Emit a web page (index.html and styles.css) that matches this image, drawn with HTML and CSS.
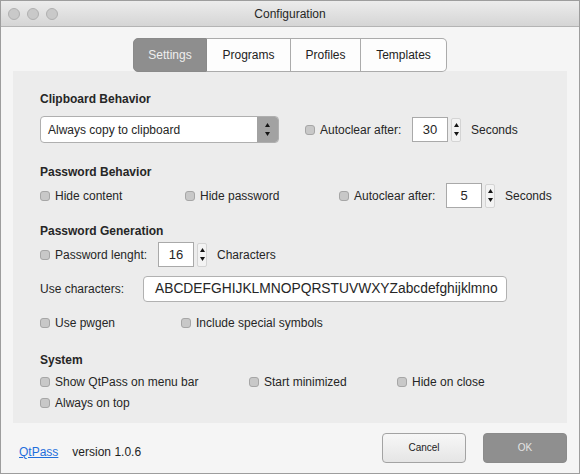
FILE: index.html
```html
<!DOCTYPE html>
<html>
<head>
<meta charset="utf-8">
<title>Configuration</title>
<link rel="stylesheet" href="styles.css">
</head>
<body>
<div class="window">
  <div class="titlebar">
    <div class="lights">
      <span class="light"></span><span class="light"></span><span class="light"></span>
    </div>
    <div class="title">Configuration</div>
    <div></div>
  </div>
  <div class="content">
    <div class="tabs">
      <div class="tab tab-settings active">Settings</div>
      <div class="tab tab-programs">Programs</div>
      <div class="tab tab-profiles">Profiles</div>
      <div class="tab tab-templates">Templates</div>
    </div>
    <div class="panel">
      <div class="heading">Clipboard Behavior</div>
      <div class="row row-clip">
        <div class="select">
          <span class="select-text">Always copy to clipboard</span>
          <span class="select-arrows"><svg width="5" height="13" viewBox="0 0 5 13"><polygon points="0,4 2.5,0 5,4" fill="#151515"/><polygon points="0,9 2.5,13 5,9" fill="#151515"/></svg></span>
        </div>
        <label class="check w-auto1"><span class="box"></span>Autoclear after:</label>
        <div class="spin"><span class="spin-input">30</span><span class="spin-arrows"><svg width="5" height="13" viewBox="0 0 5 13"><polygon points="0,4 2.5,0 5,4" fill="#151515"/><polygon points="0,9 2.5,13 5,9" fill="#151515"/></svg></span></div>
        <span class="unit">Seconds</span>
      </div>

      <div class="heading gap-h">Password Behavior</div>
      <div class="row row-pb">
        <label class="check w-hidecontent"><span class="box"></span>Hide content</label>
        <label class="check w-hidepass"><span class="box"></span>Hide password</label>
        <label class="check w-auto2"><span class="box"></span>Autoclear after:</label>
        <div class="spin"><span class="spin-input">5</span><span class="spin-arrows"><svg width="5" height="13" viewBox="0 0 5 13"><polygon points="0,4 2.5,0 5,4" fill="#151515"/><polygon points="0,9 2.5,13 5,9" fill="#151515"/></svg></span></div>
        <span class="unit">Seconds</span>
      </div>

      <div class="heading gap-h2">Password Generation</div>
      <div class="row row-pl">
        <label class="check w-length"><span class="box"></span>Password lenght:</label>
        <div class="spin"><span class="spin-input">16</span><span class="spin-arrows"><svg width="5" height="13" viewBox="0 0 5 13"><polygon points="0,4 2.5,0 5,4" fill="#151515"/><polygon points="0,9 2.5,13 5,9" fill="#151515"/></svg></span></div>
        <span class="unit">Characters</span>
      </div>
      <div class="row row-uc">
        <span class="w-usechars">Use characters:</span>
        <div class="text-input">ABCDEFGHIJKLMNOPQRSTUVWXYZabcdefghijklmno</div>
      </div>
      <div class="row row-pw">
        <label class="check w-pwgen"><span class="box"></span>Use pwgen</label>
        <label class="check"><span class="box"></span>Include special symbols</label>
      </div>

      <div class="heading gap-h">System</div>
      <div class="row row-sys1">
        <label class="check w-menubar"><span class="box"></span>Show QtPass on menu bar</label>
        <label class="check w-minimized"><span class="box"></span>Start minimized</label>
        <label class="check"><span class="box"></span>Hide on close</label>
      </div>
      <div class="row row-sys2">
        <label class="check"><span class="box"></span>Always on top</label>
      </div>
    </div>
    <div class="footer">
      <div class="footer-info">
        <a class="link" href="#">QtPass</a>
        <span>version 1.0.6</span>
      </div>
      <div class="buttons">
        <div class="btn btn-cancel">Cancel</div>
        <div class="btn btn-ok">OK</div>
      </div>
    </div>
  </div>
</div>
</body>
</html>
```
FILE: styles.css
```css
* { box-sizing: border-box; }
html, body { margin: 0; padding: 0; }
body {
  width: 580px;
  height: 474px;
  font-family: "Liberation Sans", Arial, sans-serif;
  font-size: 12px;
  line-height: 16px;
  color: #262626;
  background: #f5f5f5;
}
.window {
  width: 580px;
  height: 474px;
  border: 1px solid #9d9d9d;
  background: #f5f5f5;
  display: flex;
  flex-direction: column;
}
.titlebar {
  flex: none;
  height: 26px;
  border-bottom: 1px solid #b4b4b4;
  background: linear-gradient(#ececec, #d5d5d5);
  display: grid;
  grid-template-columns: 1fr auto 1fr;
  align-items: center;
}
.lights {
  display: flex;
  gap: 7px;
  padding-left: 7px;
}
.light {
  width: 12px;
  height: 12px;
  border-radius: 50%;
  background: #c9c9c9;
  border: 1px solid #b0b0b0;
}
.title {
  font-size: 12px;
  color: #262626;
}
.content {
  flex: 1;
  padding: 11px 12px 0;
  display: flex;
  flex-direction: column;
}
.tabs {
  display: flex;
  justify-content: center;
  margin-bottom: -1px;
  position: relative;
  z-index: 1;
}
.tab {
  height: 34px;
  display: flex;
  align-items: center;
  justify-content: center;
  background: #fdfdfd;
  border: 1px solid #ababab;
  border-left: none;
  color: #222;
}
.tab-settings { width: 74px; border-left: 1px solid #8a8a8a; border-radius: 5px 0 0 5px; }
.tab-programs { width: 84px; }
.tab-profiles { width: 70px; }
.tab-templates { width: 86px; border-radius: 0 5px 5px 0; }
.tab.active {
  background: #8e8e8e;
  border-color: #8a8a8a;
  color: #efefef;
}
.panel {
  background: #ececec;
  padding: 20px 0 12px 27px;
  display: flex;
  flex-direction: column;
}
.heading {
  font-weight: bold;
  height: 16px;
}
.gap-h { margin-top: 21px; }
.gap-h2 { margin-top: 15px; }
.row {
  display: flex;
  align-items: center;
}
.row-clip { margin-top: 9px; height: 27px; }
.row-pb { margin-top: 3px; height: 25px; }
.row-pl { margin-top: 3px; height: 25px; }
.row-uc { margin-top: 9px; height: 26px; }
.row-pw { margin-top: 13px; height: 16px; }
.row-sys1 { margin-top: 6px; height: 16px; }
.row-sys2 { margin-top: 5px; height: 16px; }
.check {
  display: flex;
  align-items: center;
  flex: none;
  white-space: nowrap;
}
.box {
  width: 10px;
  height: 10px;
  border-radius: 3px;
  background: #c8c8c8;
  border: 1px solid #a6a6a6;
  margin-right: 5px;
  flex: none;
}
.w-auto1 { width: 107px; margin-left: 26px; }
.w-hidecontent { width: 145px; }
.w-hidepass { width: 154px; }
.w-auto2 { width: 107px; }
.w-length { width: 118px; }
.w-usechars { width: 103px; flex: none; }
.w-pwgen { width: 141px; }
.w-menubar { width: 209px; }
.w-minimized { width: 148px; }
.select {
  width: 239px;
  height: 27px;
  border: 1px solid #afafaf;
  border-radius: 4px;
  background: #fff;
  display: flex;
  overflow: hidden;
  flex: none;
}
.select-text {
  flex: 1;
  padding-left: 7px;
  display: flex;
  align-items: center;
}
.select-arrows {
  width: 21px;
  background: #a2a2a2;
  display: flex;
  align-items: center;
  justify-content: center;
}
.spin {
  display: flex;
  align-items: center;
  flex: none;
}
.spin-input {
  width: 36px;
  height: 25px;
  border: 1px solid #a9a9a9;
  background: #fff;
  display: flex;
  align-items: center;
  justify-content: center;
  font-size: 13px;
}
.spin-arrows {
  width: 10px;
  height: 24px;
  margin-left: 3px;
  border: 1px solid #d4d4d4;
  border-radius: 2px;
  background: #f3f3f3;
  display: flex;
  align-items: center;
  justify-content: center;
}
.unit { margin-left: 10px; }
.text-input {
  width: 364px;
  height: 26px;
  border: 1px solid #b1b1b1;
  border-radius: 4px;
  background: #fff;
  padding-left: 11px;
  font-size: 13.8px;
  display: flex;
  align-items: center;
  overflow: hidden;
  white-space: nowrap;
  flex: none;
}
.footer {
  margin-top: 10px;
  height: 30px;
  display: flex;
  align-items: flex-start;
  padding-left: 6px;
}
.footer-info {
  margin-top: 11px;
  display: flex;
  gap: 14px;
  color: #1e1e1e;
}
.link {
  color: #1f6fdc;
  text-decoration: underline;
}
.buttons {
  margin-left: auto;
  display: flex;
  gap: 17px;
}
.btn {
  width: 84px;
  height: 30px;
  border-radius: 4px;
  font-size: 10px;
  display: flex;
  align-items: center;
  justify-content: center;
}
.btn-cancel {
  border: 1px solid #a3a3a3;
  background: linear-gradient(#f7f7f7, #e5e5e5);
  color: #222;
}
.btn-ok {
  border: 1px solid #8b8b8b;
  background: #8f8f8f;
  color: #e4e4e4;
}
```
